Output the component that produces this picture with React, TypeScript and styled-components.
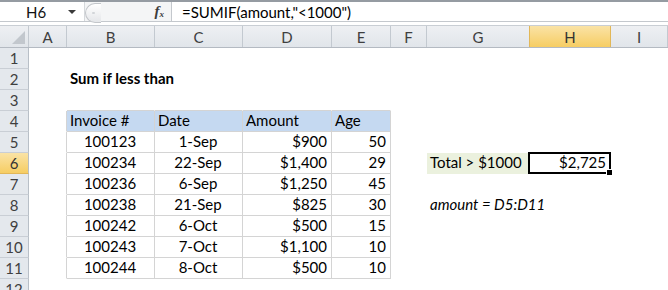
import React from "react";
import styled, { createGlobalStyle, css } from "styled-components";

type Align = "left" | "center" | "right";

interface CellSpec {
    text?: string;
    align?: Align;
    bold?: boolean;
    italic?: boolean;
    fill?: string;
}

const COLUMNS = "29px 38px 88px 88px 89px 59px 36px 103px 81px 1fr";
const LETTERS = ["A", "B", "C", "D", "E", "F", "G", "H", "I"];
const ROWS = [1, 2, 3, 4, 5, 6, 7, 8, 9, 10, 11, 12];
const ACTIVE_COL = "H";
const ACTIVE_ROW = 6;

const GRID = "#d4d4d4";
const HEAD_BLUE = "#c5d9f1";
const LABEL_GREEN = "#ebf1de";
const FONT = `Lato, "Open Sans", "Liberation Sans", sans-serif`;

const invoices = [
    ["100123", "1-Sep", "$900", "50"],
    ["100234", "22-Sep", "$1,400", "29"],
    ["100236", "6-Sep", "$1,250", "45"],
    ["100238", "21-Sep", "$825", "30"],
    ["100242", "6-Oct", "$500", "15"],
    ["100243", "7-Oct", "$1,100", "10"],
    ["100244", "8-Oct", "$500", "10"],
];

const cells: Record<string, CellSpec> = {
    B2: { text: "Sum if less than", bold: true },
    B4: { text: "Invoice #", fill: HEAD_BLUE },
    C4: { text: "Date", fill: HEAD_BLUE },
    D4: { text: "Amount", fill: HEAD_BLUE },
    E4: { text: "Age", fill: HEAD_BLUE },
    G6: { text: "Total > $1000", fill: LABEL_GREEN },
    H6: { text: "$2,725", align: "right" },
    G8: { text: "amount = D5:D11", italic: true },
};

invoices.forEach((r, i) => {
    const row = 5 + i;
    cells[`B${row}`] = { text: r[0], align: "center" };
    cells[`C${row}`] = { text: r[1], align: "center" };
    cells[`D${row}`] = { text: r[2], align: "right" };
    cells[`E${row}`] = { text: r[3], align: "right" };
});

// table B4:E11 has thin borders all round
const inTable = (c: number, r: number) => c >= 1 && c <= 4 && r >= 4 && r <= 11;
const hasRight = (c: number, r: number) => inTable(c, r) || (c === 0 && r >= 4 && r <= 11);
const hasBottom = (c: number, r: number) => inTable(c, r) || (r === 3 && c >= 1 && c <= 4);

const GlobalStyle = createGlobalStyle`
  html, body {
    margin: 0;
    padding: 0;
    background: #fff;
  }
  body {
    width: 668px;
    height: 290px;
    overflow: hidden;
    font-family: ${FONT};
  }
`;

const Window = styled.div`
  width: 668px;
  height: 290px;
  overflow: hidden;
  background: #fff;
`;

const FormulaBar = styled.div`
  display: flex;
  height: 22px;
  box-sizing: border-box;
  border-top: 2px solid #959ba2;
  border-bottom: 1px solid #c4c8cd;
  background: #f4f5f6;
`;

const NameBox = styled.div`
  display: flex;
  align-items: center;
  width: 85px;
  box-sizing: border-box;
  padding-left: 26px;
  background: #fff;
  border-right: 1px solid #d6d9dc;
  font-size: 15px;
  color: #111;
`;

const DropArrow = styled.span`
  margin-left: auto;
  margin-right: 8px;
  width: 0;
  height: 0;
  border-left: 4px solid transparent;
  border-right: 4px solid transparent;
  border-top: 4px solid #3a3a3a;
`;

const Splitter = styled.div`
  width: 15px;
  height: 18px;
  margin-top: 1px;
  border: 1px solid #c3c6ca;
  border-right: none;
  border-radius: 10px 0 0 10px;
  background: linear-gradient(#ffffff, #e4e6e9);
  display: flex;
  align-items: center;
  justify-content: center;

  &::after {
    content: "";
    width: 3px;
    height: 2px;
    border-radius: 1px;
    background: #d2d5d9;
  }
`;

const FxArea = styled.div`
  display: flex;
  align-items: center;
  justify-content: flex-end;
  width: 70px;
  padding-right: 7px;
  box-sizing: border-box;
`;

const Fx = styled.span`
  font-family: "Liberation Serif", "DejaVu Serif", serif;
  font-style: italic;
  font-weight: 700;
  font-size: 15px;
  color: #3c3c3c;

  sub {
    font-size: 9px;
    vertical-align: -1px;
  }
`;

const FormulaInput = styled.div`
  flex: 1;
  display: flex;
  align-items: center;
  padding-left: 10px;
  background: #fff;
  border-left: 1px solid #c4c8cd;
  font-size: 15px;
  color: #000;
  white-space: nowrap;
`;

const Gap = styled.div`
  height: 3px;
  background: #fff;
`;

const CommonRow = styled.div<{ $columns: string }>`
  display: grid;
  grid-template-columns: ${(p) => p.$columns};
`;

const ColHeaderRow = styled(CommonRow)`
  height: 23px;
  box-sizing: border-box;
  border-top: 1px solid #c9ced4;
  border-bottom: 1px solid #b4bac2;
  background: linear-gradient(#eef0f3, #e1e5ea);
`;

const Corner = styled.div`
  position: relative;
  border-right: 1px solid #c3c9d0;

  &::after {
    content: "";
    position: absolute;
    right: 3px;
    bottom: 3px;
    width: 0;
    height: 0;
    border-left: 13px solid transparent;
    border-bottom: 13px solid #c2c7cd;
  }
`;

const ColHeader = styled.div<{ $active?: boolean }>`
  display: flex;
  align-items: center;
  justify-content: center;
  border-right: 1px solid #c3c9d0;
  font-size: 15px;
  color: #3f3f3f;
  ${(p) =>
    p.$active &&
    css`
      background: linear-gradient(#fae3a6, #f6cd63);
      border-right-color: #e2b758;
      border-left: 1px solid #e2b758;
      margin-left: -1px;
      color: #333;
    `}
`;

const SheetRow = styled(CommonRow)`
  height: 21px;
`;

const RowHeader = styled.div<{ $active?: boolean }>`
  display: flex;
  align-items: center;
  justify-content: center;
  box-sizing: border-box;
  background: #e4e8ed;
  border-right: 1px solid #b8bfc7;
  border-bottom: 1px solid #c9ced5;
  font-size: 15px;
  color: #3f3f3f;
  ${(p) =>
    p.$active &&
    css`
      background: linear-gradient(#fae3a6, #f6cd63);
      border-bottom-color: #e2b758;
      color: #333;
    `}
`;

const justify = { left: "flex-start", center: "center", right: "flex-end" };

const Cell = styled.div<{
    $align: Align;
    $bold?: boolean;
    $italic?: boolean;
    $fill?: string;
    $right?: boolean;
    $bottom?: boolean;
    $selected?: boolean;
}>`
  position: relative;
  display: flex;
  align-items: flex-end;
  justify-content: ${(p) => justify[p.$align]};
  min-width: 0;
  box-sizing: border-box;
  padding: 0 4px 1px 3px;
  white-space: nowrap;
  font-size: 15px;
  line-height: 19px;
  color: #000;
  font-weight: ${(p) => (p.$bold ? 700 : 400)};
  font-style: ${(p) => (p.$italic ? "italic" : "normal")};
  background: ${(p) => p.$fill ?? "transparent"};
  border-right: 1px solid ${(p) => (p.$right ? GRID : "transparent")};
  border-bottom: 1px solid ${(p) => (p.$bottom ? GRID : "transparent")};

  ${(p) =>
    p.$selected &&
    css`
      &::after {
        content: "";
        position: absolute;
        left: -2px;
        top: -1px;
        right: -1px;
        bottom: -1px;
        border: 2px solid #000;
        z-index: 2;
      }
      &::before {
        content: "";
        position: absolute;
        right: -3px;
        bottom: -3px;
        width: 5px;
        height: 5px;
        background: #000;
        border: 1px solid #fff;
        z-index: 3;
      }
    `}
`;

const App = () => {
    return (
        <Window>
            <GlobalStyle />
            <FormulaBar>
                <NameBox>
                    H6
                    <DropArrow />
                </NameBox>
                <Splitter />
                <FxArea>
                    <Fx>
                        f<sub>x</sub>
                    </Fx>
                </FxArea>
                <FormulaInput>=SUMIF(amount,"&lt;1000")</FormulaInput>
            </FormulaBar>
            <Gap />
            <ColHeaderRow $columns={COLUMNS}>
                <Corner />
                {LETTERS.map((l) => (
                    <ColHeader key={l} $active={l === ACTIVE_COL}>
                        {l}
                    </ColHeader>
                ))}
            </ColHeaderRow>
            {ROWS.map((r) => (
                <SheetRow key={r} $columns={COLUMNS}>
                    <RowHeader $active={r === ACTIVE_ROW}>{r}</RowHeader>
                    {LETTERS.map((l, c) => {
                        const spec = cells[`${l}${r}`] ?? {};
                        return (
                            <Cell
                                key={l}
                                $align={spec.align ?? "left"}
                                $bold={spec.bold}
                                $italic={spec.italic}
                                $fill={spec.fill}
                                $right={hasRight(c, r)}
                                $bottom={hasBottom(c, r)}
                                $selected={l === ACTIVE_COL && r === ACTIVE_ROW}
                            >
                                {spec.text}
                            </Cell>
                        );
                    })}
                </SheetRow>
            ))}
        </Window>
    );
};

export default App;
